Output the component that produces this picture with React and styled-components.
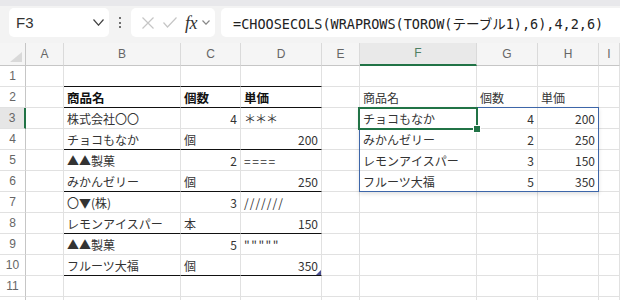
import React from 'react';
import styled, { createGlobalStyle } from 'styled-components';

const Global = createGlobalStyle`
  html, body { margin: 0; padding: 0; background: #fff; }
  body { width: 620px; height: 300px; overflow: hidden; font-family: "Noto Sans CJK JP", "Noto Sans", sans-serif; }
`;

const Shell = styled.div`
  width: 620px;
  height: 300px;
  overflow: hidden;
  display: flex;
  flex-direction: column;
  background: #fff;
`;

const Bar = styled.div`
  flex: none;
  height: 43px;
  box-sizing: border-box;
  background: #f3f3f3;
  border-top: 6px solid #e8e8eb;
  padding: 2px 0 6px 9px;
  display: flex;
  align-items: stretch;
`;

const NameBox = styled.div`
  width: 100px;
  box-sizing: border-box;
  background: #fff;
  border-radius: 5px;
  padding: 0 5px 0 7px;
  display: flex;
  align-items: center;
  justify-content: space-between;
  font-family: "Liberation Sans", sans-serif;
  font-size: 15px;
  color: #333;
`;

const Dots = styled.div`
  width: 22px;
  display: flex;
  flex-direction: column;
  align-items: center;
  justify-content: center;
  gap: 2.5px;
  span { width: 2px; height: 2px; border-radius: 50%; background: #444; }
`;

const IconGroup = styled.div`
  width: 84px;
  box-sizing: border-box;
  background: #fff;
  border-radius: 5px;
  display: flex;
  align-items: center;
  padding: 0 4px 0 6px;
`;

const IconSlot = styled.div`
  width: ${p => p.$w}px;
  display: flex;
  align-items: center;
  justify-content: center;
`;

const Fx = styled.span`
  font-family: "Liberation Serif", serif;
  font-style: italic;
  font-size: 18px;
  color: #333;
  letter-spacing: -0.5px;
  line-height: 1;
`;

const FormulaBox = styled.div`
  flex: 1;
  margin-left: 6px;
  background: #fff;
  border-radius: 5px 0 0 5px;
  padding-left: 12px;
  display: flex;
  align-items: center;
  white-space: nowrap;
  font-family: "DejaVu Sans Mono", "Noto Sans CJK JP", monospace;
  font-size: 13.5px;
  color: #222;
`;

const Sheet = styled.div`
  flex: none;
  display: grid;
  grid-template-columns: 26px 38px 117px 60px 81px 38px 117px 61px 61px 1fr;
  grid-template-rows: 23px repeat(12, 21px);
  font-family: "Noto Sans CJK JP", sans-serif;
`;

const Corner = styled.div`
  grid-row: 1;
  grid-column: 1;
  box-sizing: border-box;
  background: #f5f5f5;
  border-right: 1px solid #c6c6c6;
  border-bottom: 1px solid #c6c6c6;
  position: relative;
  &::after {
    content: "";
    position: absolute;
    right: 3px;
    bottom: 3px;
    width: 0;
    height: 0;
    border-left: 12px solid transparent;
    border-bottom: 10px solid #d9d9d9;
  }
`;

const ColHead = styled.div`
  grid-row: 1;
  grid-column: ${p => p.$col};
  box-sizing: border-box;
  background: ${p => (p.$sel ? '#e9e9e9' : '#f5f5f5')};
  border-right: 1px solid #dadada;
  border-bottom: ${p => (p.$sel ? '2px solid #217346' : '1px solid #c6c6c6')};
  color: ${p => (p.$sel ? '#4d8062' : '#666')};
  font-family: "Liberation Sans", sans-serif;
  font-size: 12px;
  display: flex;
  align-items: center;
  justify-content: center;
  padding-bottom: 1px;
`;

const RowHead = styled.div`
  grid-row: ${p => p.$row};
  grid-column: 1;
  box-sizing: border-box;
  background: ${p => (p.$sel ? '#e6e6e6' : '#fff')};
  border-right: ${p => (p.$sel ? '2px solid #217346' : '1px solid #c6c6c6')};
  border-bottom: 1px solid #e1e1e1;
  color: #666;
  font-family: "Liberation Sans", sans-serif;
  font-size: 12px;
  display: flex;
  align-items: center;
  justify-content: center;
`;

const Cell = styled.div`
  grid-row: ${p => p.$row};
  grid-column: ${p => p.$col};
  box-sizing: border-box;
  position: relative;
  border-right: 1px solid #e1e1e1;
  border-bottom: 1px solid ${p => (p.$rule ? '#111' : '#e1e1e1')};
  padding: 0 3px 0 3px;
  display: flex;
  align-items: center;
  justify-content: ${p => (p.$right ? 'flex-end' : 'flex-start')};
  font-size: ${p => (p.$bold ? 12.5 : 12)}px;
  font-weight: ${p => (p.$bold ? 700 : 400)};
  color: ${p => (p.$bold ? '#111' : '#333')};
  white-space: nowrap;
  letter-spacing: ${p => p.$ls || 0}px;
  &::after {
    content: "";
    display: ${p => (p.$handle ? 'block' : 'none')};
    position: absolute;
    right: 0;
    bottom: 0;
    width: 0;
    height: 0;
    border-left: 5px solid transparent;
    border-bottom: 5px solid #4a4f92;
  }
`;

const Spill = styled.div`
  grid-column: 7 / 10;
  grid-row: 4 / 8;
  margin: -1px 0 0 -1px;
  border: 1px solid #3d66a9;
  box-shadow: 0 2px 4px rgba(0, 0, 0, 0.12);
  pointer-events: none;
  z-index: 1;
`;

const Selection = styled.div`
  grid-column: 7 / 8;
  grid-row: 4 / 5;
  margin: -1px -1px -1px -2px;
  border: 2px solid #217346;
  position: relative;
  pointer-events: none;
  z-index: 2;
  &::after {
    content: "";
    position: absolute;
    right: -5px;
    bottom: -5px;
    width: 6px;
    height: 6px;
    background: #217346;
    border: 1px solid #fff;
  }
`;

const COLS = ['A', 'B', 'C', 'D', 'E', 'F', 'G', 'H', 'I'];

const left = {
  2: [{ t: '商品名', b: 1 }, { t: '個数', b: 1 }, { t: '単価', b: 1 }],
  3: [{ t: '株式会社〇〇' }, { t: '4', r: 1 }, { t: '＊＊＊', ls: -1 }],
  4: [{ t: 'チョコもなか' }, { t: '個' }, { t: '200', r: 1 }],
  5: [{ t: '▲▲製菓' }, { t: '2', r: 1 }, { t: '====', ls: 1.5 }],
  6: [{ t: 'みかんゼリー' }, { t: '個' }, { t: '250', r: 1 }],
  7: [{ t: '〇▼(株)' }, { t: '3', r: 1 }, { t: '///////', ls: 1 }],
  8: [{ t: 'レモンアイスパー' }, { t: '本' }, { t: '150', r: 1 }],
  9: [{ t: '▲▲製菓' }, { t: '5', r: 1 }, { t: '"""""', ls: 1.5 }],
  10: [{ t: 'フルーツ大福' }, { t: '個' }, { t: '350', r: 1, h: 1 }],
};

const right = {
  2: [{ t: '商品名' }, { t: '個数' }, { t: '単価' }],
  3: [{ t: 'チョコもなか' }, { t: '4', r: 1 }, { t: '200', r: 1 }],
  4: [{ t: 'みかんゼリー' }, { t: '2', r: 1 }, { t: '250', r: 1 }],
  5: [{ t: 'レモンアイスパー' }, { t: '3', r: 1 }, { t: '150', r: 1 }],
  6: [{ t: 'フルーツ大福' }, { t: '5', r: 1 }, { t: '350', r: 1 }],
};

const ruled = new Set([1, 2, 4, 6, 8, 10]);

function rowCells(r) {
  const L = left[r] || [{}, {}, {}];
  const R = right[r] || [{}, {}, {}];
  const all = [{}, ...L, {}, ...R, {}];
  return all.map((c, i) => {
    const isLeftTable = i >= 1 && i <= 3;
    return (
      <Cell
        key={i}
        $row={r + 1}
        $col={i + 2}
        $right={!!c.r}
        $bold={!!c.b}
        $ls={c.ls}
        $handle={!!c.h}
        $rule={isLeftTable && ruled.has(r)}
      >
        {c.t || ''}
      </Cell>
    );
  });
}

const Chevron = ({ w = 10, h = 6, color = '#444' }) => (
  <svg width={w} height={h} viewBox={`0 0 ${w} ${h}`}>
    <polyline points={`0.5,0.5 ${w / 2},${h - 0.8} ${w - 0.5},0.5`} fill="none" stroke={color} strokeWidth="1.2" />
  </svg>
);

export default function App() {
  const rows = [];
  for (let r = 1; r <= 12; r++) {
    rows.push(
      <React.Fragment key={r}>
        <RowHead $row={r + 1} $sel={r === 3}>{r <= 11 ? r : ''}</RowHead>
        {rowCells(r)}
      </React.Fragment>
    );
  }
  return (
    <Shell>
      <Global />
      <Bar>
        <NameBox>
          <span>F3</span>
          <Chevron w={11} h={7} color="#444" />
        </NameBox>
        <Dots>
          <span />
          <span />
          <span />
        </Dots>
        <IconGroup>
          <IconSlot $w={22}>
            <svg width="12" height="12" viewBox="0 0 12 12">
              <path d="M0.5 0.5 L11.5 11.5 M11.5 0.5 L0.5 11.5" stroke="#c6c6c6" strokeWidth="1.2" fill="none" />
            </svg>
          </IconSlot>
          <IconSlot $w={22}>
            <svg width="14" height="11" viewBox="0 0 14 11">
              <polyline points="0.5,5.5 4.5,10 13.5,0.5" stroke="#c6c6c6" strokeWidth="1.2" fill="none" />
            </svg>
          </IconSlot>
          <IconSlot $w={20}>
            <Fx>fx</Fx>
          </IconSlot>
          <IconSlot $w={10}>
            <Chevron w={8} h={5} color="#888" />
          </IconSlot>
        </IconGroup>
        <FormulaBox>=CHOOSECOLS(WRAPROWS(TOROW(テーブル1),6),4,2,6)</FormulaBox>
      </Bar>
      <Sheet>
        <Corner />
        {COLS.map((c, i) => (
          <ColHead key={c} $col={i + 2} $sel={c === 'F'}>{c}</ColHead>
        ))}
        {rows}
        <Spill />
        <Selection />
      </Sheet>
    </Shell>
  );
}
